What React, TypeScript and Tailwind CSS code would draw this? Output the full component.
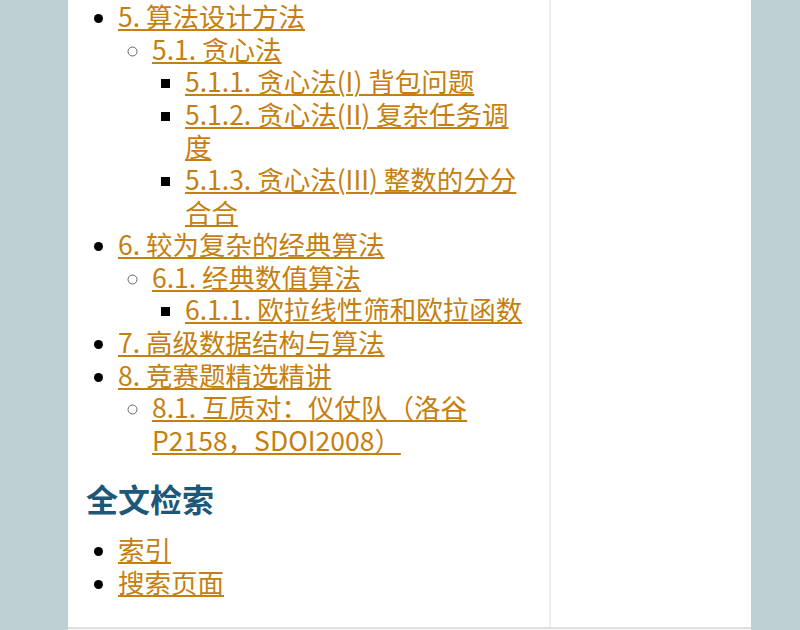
import React from 'react';

type Item = { label: string; children?: Item[] };

const toc: Item[] = [
  {
    label: '5. 算法设计方法',
    children: [
      {
        label: '5.1. 贪心法',
        children: [
          { label: '5.1.1. 贪心法(I) 背包问题' },
          { label: '5.1.2. 贪心法(II) 复杂任务调度' },
          { label: '5.1.3. 贪心法(III) 整数的分分合合' },
        ],
      },
    ],
  },
  {
    label: '6. 较为复杂的经典算法',
    children: [
      {
        label: '6.1. 经典数值算法',
        children: [{ label: '6.1.1. 欧拉线性筛和欧拉函数' }],
      },
    ],
  },
  { label: '7. 高级数据结构与算法' },
  {
    label: '8. 竞赛题精选精讲',
    children: [{ label: '8.1. 互质对：仪仗队（洛谷P2158，SDOI2008） ' }],
  },
];

const linkCls =
  'text-[#c57f10] underline decoration-[2px] underline-offset-[2px] cursor-pointer';

function TocList({ items, depth }: { items: Item[]; depth: number }) {
  const listCls =
    depth === 0
      ? 'list-disc pl-[32px] marker:text-[22px]'
      : depth === 1
        ? 'list-[circle] pl-[34px] marker:text-[18px] marker:text-[#666]'
        : 'list-[square] pl-[33px] marker:text-[22px] marker:text-black';
  return (
    <ul className={listCls}>
      {items.map((item) => (
        <li key={item.label}>
          <a className={linkCls}>{item.label}</a>
          {item.children && <TocList items={item.children} depth={depth + 1} />}
        </li>
      ))}
    </ul>
  );
}

export default function App() {
  return (
    <div
      className="min-h-screen bg-[#bfd0d4] pl-[68px] text-black"
      style={{ fontFamily: '"Noto Sans CJK SC", "Noto Sans", sans-serif' }}
    >
      <div className="w-[683px] bg-white">
        <div className="flex">
          <main className="w-[481px] pl-[18px] pr-[18px] pb-[28px] text-[26.5px] leading-[32.6px]">
            <TocList items={toc} depth={0} />

            <h2 className="mt-[22px] mb-[15px] text-[32px] leading-[40px] font-bold text-[#1d5879]">
              全文检索
            </h2>
            <ul className="list-disc pl-[32px] marker:text-[22px]">
              <li>
                <a className={linkCls}>索引</a>
              </li>
              <li>
                <a className={linkCls}>搜索页面</a>
              </li>
            </ul>
          </main>
          <aside className="w-[202px] border-l-2 border-[#ececec]" />
        </div>
        <div className="h-[8px] border-t-2 border-[#dedede] bg-[#f7f7f7]" />
      </div>
    </div>
  );
}
